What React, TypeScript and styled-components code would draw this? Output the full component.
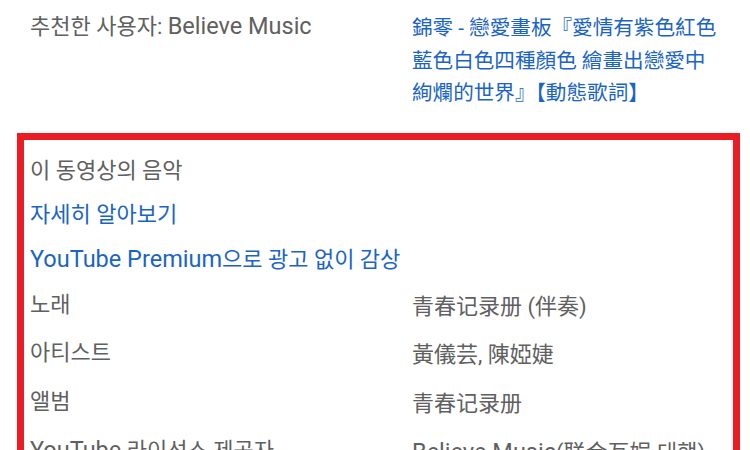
import React from 'react';
import styled, { createGlobalStyle } from 'styled-components';

const GlobalStyle = createGlobalStyle`
  body {
    margin: 0;
    background: #ffffff;
    font-family: Roboto, "Noto Sans CJK KR", "Noto Sans CJK TC", sans-serif;
    -webkit-font-smoothing: antialiased;
  }
`;

const Page = styled.div`
  width: 750px;
  height: 450px;
  overflow: hidden;
  background: #fff;
`;

const Row = styled.div`
  display: grid;
  grid-template-columns: 382px 1fr;
  padding: 12px 30px 0 30px;
`;

const Label = styled.div`
  font-size: 22px;
  line-height: 29px;
  color: #606060;
`;

// latin words render a little wider in the original
const Latin = styled.span`
  font-size: 23.5px;
`;

const VideoLink = styled.a`
  font-family: Roboto, "Noto Sans CJK TC", sans-serif;
  font-size: 20.6px;
  line-height: 32.5px;
  color: #1a64c6;
  text-decoration: none;
  white-space: nowrap;
`;

const MusicBox = styled.section`
  margin: 23px 10px 0 17px;
  border: 7px solid #ec1c24;
  border-bottom: none;
  padding: 9px 6px 0 6px;
  height: 320px;
`;

const Heading = styled.div`
  font-size: 22px;
  line-height: 44px;
  color: #606060;
`;

const BlueLink = styled.a`
  display: block;
  font-size: 22px;
  line-height: 44px;
  color: #1a64c6;
  text-decoration: none;
`;

const InfoRow = styled.div`
  display: grid;
  grid-template-columns: 382px 1fr;
  height: 48.5px;
  align-items: start;
`;

const InfoLabel = styled.div`
  font-size: 22px;
  line-height: 40px;
  padding-top: 3px;
  color: #606060;
  white-space: nowrap;
`;

const InfoValue = styled.div`
  font-family: Roboto, "Noto Sans CJK SC", sans-serif;
  font-size: 22px;
  line-height: 40px;
  padding-top: 5px;
  color: #606060;
  white-space: nowrap;
`;

const rows: [React.ReactNode, React.ReactNode][] = [
  ['노래', '青春记录册 (伴奏)'],
  ['아티스트', '黃儀芸, 陳婭婕'],
  ['앨범', '青春记录册'],
  [
    <><Latin>YouTube</Latin> 라이선스 제공자</>,
    <><Latin>Believe Music</Latin>(联合互娱 대행)</>,
  ],
];

export default function App() {
  return (
    <Page>
      <GlobalStyle />
      <Row>
        <Label>
          추천한 사용자: <Latin>Believe Music</Latin>
        </Label>
        <VideoLink href="#">
          錦零 - 戀愛畫板『愛情有紫色紅色
          <br />
          藍色白色四種顏色 繪畫出戀愛中
          <br />
          絢爛的世界』【動態歌詞】
        </VideoLink>
      </Row>
      <MusicBox>
        <Heading>이 동영상의 음악</Heading>
        <BlueLink href="#">자세히 알아보기</BlueLink>
        <BlueLink href="#">
          <Latin>YouTube Premium</Latin>으로 광고 없이 감상
        </BlueLink>
        {rows.map(([label, value], i) => (
          <InfoRow key={i}>
            <InfoLabel>{label}</InfoLabel>
            <InfoValue>{value}</InfoValue>
          </InfoRow>
        ))}
      </MusicBox>
    </Page>
  );
}
